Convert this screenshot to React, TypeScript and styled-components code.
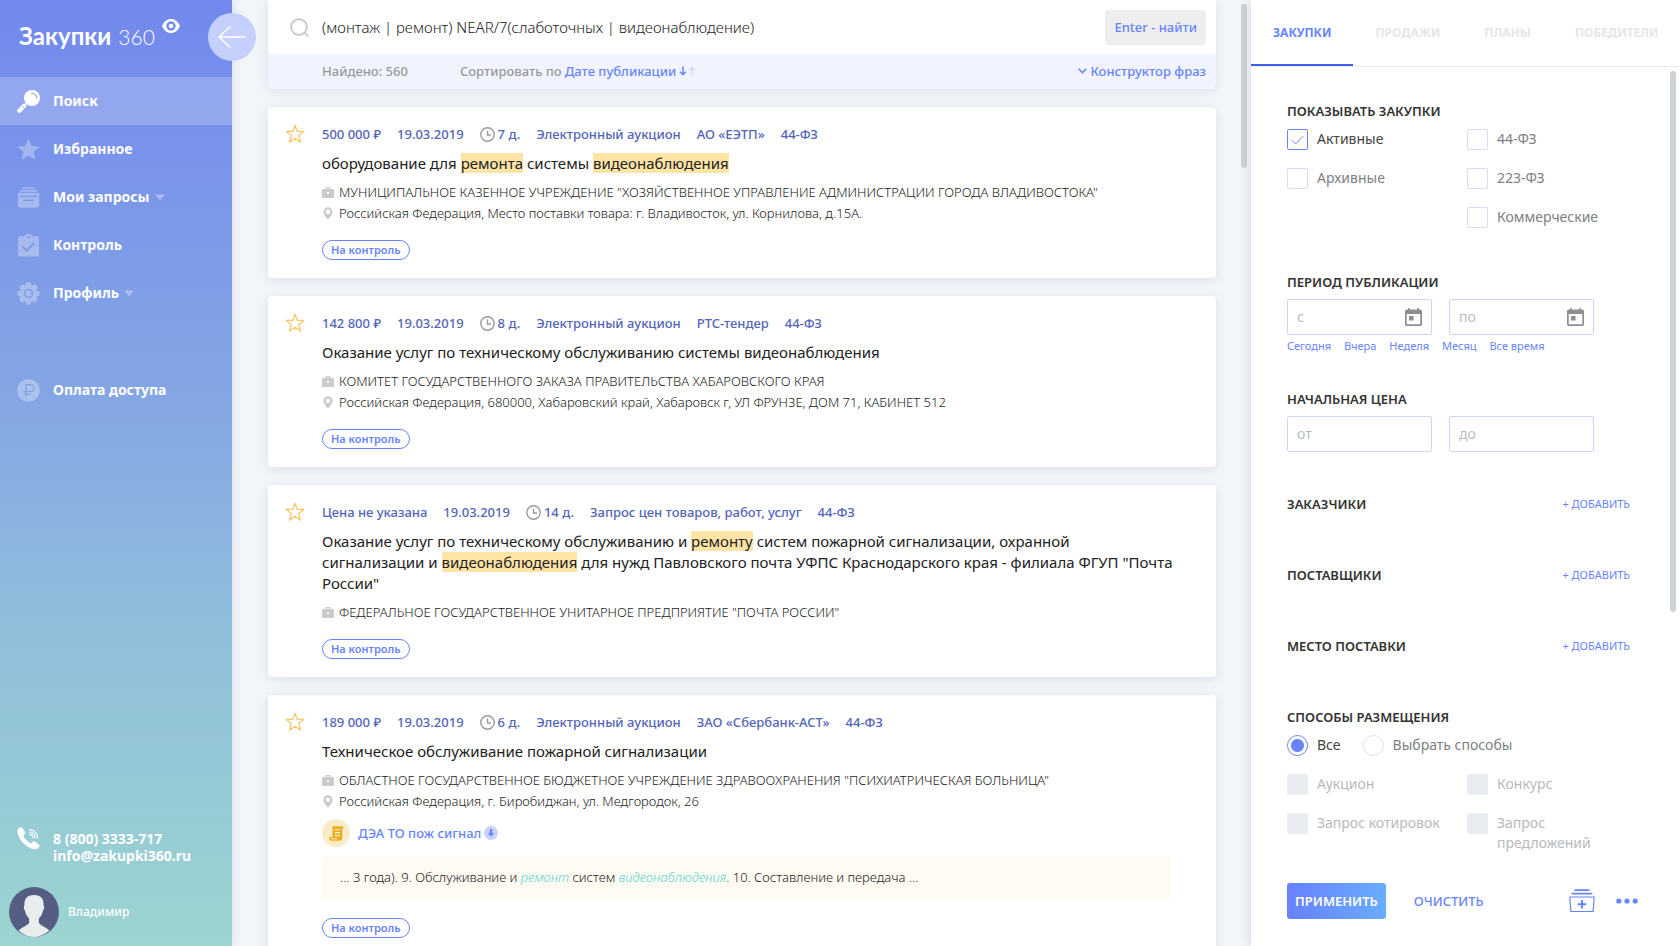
import React, { useState } from "react";
import styled, { createGlobalStyle, css } from "styled-components";

const GlobalStyle = createGlobalStyle`
  *, *::before, *::after { box-sizing: border-box; }
  body {
    margin: 0;
    font-family: "Noto Sans", "Open Sans", sans-serif;
    font-size: 14px;
    line-height: 20px;
    color: #333;
    background: #f3f6f9;
  }
  button, input { font: inherit; color: inherit; }
  button { border: 0; padding: 0; background: none; cursor: pointer; }
  a { color: inherit; text-decoration: none; }
  h2, h3, p, ul { margin: 0; padding: 0; }
  ul { list-style: none; }
  svg { display: block; flex: none; }
`;

const blue = "#6884fb";

/* ---------- Page shell ---------- */

const Page = styled.div`
  display: flex;
  height: 100vh;
  overflow: hidden;
`;

const Sidebar = styled.aside`
  position: relative;
  z-index: 2;
  flex: none;
  display: flex;
  flex-direction: column;
  width: 232px;
  color: #fff;
  background: linear-gradient(180deg, #7288ee 0%, #84a6e4 42%, #8fbedb 66%, #9cd4d0 100%);
  box-shadow: 2px 0 10px rgba(90, 100, 150, 0.14);
`;

const Main = styled.main`
  flex: 1;
  display: flex;
  min-width: 0;
`;

const Feed = styled.div`
  flex: 1;
  display: flex;
  flex-direction: column;
  gap: 18px;
  min-width: 0;
  padding: 0 25px 18px 36px;
  overflow-y: auto;
  scrollbar-width: none;
`;

const ScrollTrack = styled.div`
  flex: none;
  width: 10px;
  padding-top: 4px;
`;

const ScrollThumb = styled.div<{ $size: string }>`
  width: 6px;
  height: ${(p) => p.$size};
  border-radius: 3px;
  background: #cfd2d5;
`;

/* ---------- Sidebar ---------- */

const Logo = styled.a`
  display: flex;
  align-items: baseline;
  gap: 7px;
  height: 77px;
  padding: 21px 0 0 19px;
  font-family: Lato, sans-serif;
  font-size: 24px;
  line-height: 30px;
  font-weight: 700;
`;

const LogoNumber = styled.span`
  font-size: 21px;
  font-weight: 300;
`;

const LogoEye = styled.svg`
  align-self: flex-start;
  margin-top: -2px;
`;

const Collapse = styled.button`
  position: absolute;
  top: 13px;
  right: -24px;
  display: grid;
  place-items: center;
  width: 48px;
  height: 48px;
  border-radius: 50%;
  background: #c6d0fc;
`;

const NavLink = styled.a<{ $active?: boolean; $apart?: boolean }>`
  display: flex;
  align-items: center;
  height: 48px;
  margin-top: ${(p) => (p.$apart ? 49 : 0)}px;
  padding-left: 17px;
  font-weight: 700;
  background: ${(p) => (p.$active ? "rgba(255, 255, 255, 0.21)" : "none")};
  & > svg:first-child {
    margin-right: 13px;
    opacity: ${(p) => (p.$active ? 1 : 0.32)};
  }
`;

const Caret = styled.svg`
  margin-left: 5px;
  opacity: 0.35;
`;

const Contacts = styled.address`
  display: flex;
  gap: 13px;
  margin-top: auto;
  padding-left: 17px;
  font-style: normal;
  font-weight: 700;
  line-height: 17px;
`;

const ContactLines = styled.div`
  display: flex;
  flex-direction: column;
  padding-top: 3px;
`;

const UserLink = styled.a`
  display: flex;
  align-items: center;
  gap: 9px;
  padding: 23px 9px 9px;
  font-size: 12px;
  font-weight: 500;
`;

/* ---------- Search ---------- */

const surface = css`
  flex: none;
  background: #fff;
  box-shadow: 0 2px 12px rgba(95, 105, 160, 0.17);
`;

const SearchCard = styled.section`
  ${surface}
  border-radius: 0 0 6px 6px;
`;

const SearchForm = styled.form`
  display: flex;
  align-items: center;
  height: 54px;
  padding: 0 10px 0 22px;
`;

const QueryInput = styled.input`
  flex: 1;
  min-width: 0;
  padding: 0;
  margin-left: 13px;
  border: 0;
  outline: 0;
  font-size: 15px;
  font-weight: 300;
  color: #222;
  background: none;
`;

const FindButton = styled.button`
  height: 35px;
  padding: 0 9px;
  border-radius: 3px;
  font-size: 13px;
  font-weight: 500;
  color: ${blue};
  background: #eee;
`;

const SearchBar = styled.div`
  display: flex;
  align-items: center;
  height: 35px;
  padding: 0 10px 2px 54px;
  border-radius: 0 0 6px 6px;
  font-size: 13px;
  font-weight: 500;
  color: #999;
  background: #f1f4ff;
`;

const SortGroup = styled.div`
  display: flex;
  align-items: center;
  gap: 3px;
  margin-left: 52px;
`;

const LinkButton = styled.button`
  display: flex;
  align-items: center;
  gap: 3px;
  font-weight: 500;
  color: ${blue};
`;

const PhraseButton = styled(LinkButton)`
  margin-left: auto;
`;

/* ---------- Tender cards ---------- */

const Card = styled.article`
  ${surface}
  display: flex;
  align-items: flex-start;
  padding: 17px 42px 18px 17px;
  border-radius: 4px;
`;

const StarButton = styled.button`
  flex: none;
  width: 37px;
`;

const CardBody = styled.div`
  flex: 1;
  min-width: 0;
`;

const Meta = styled.ul`
  display: flex;
  gap: 16px;
  font-size: 13px;
  font-weight: 500;
  color: #5365b8;
`;

const MetaItem = styled.li`
  display: flex;
  align-items: center;
  gap: 3px;
`;

const Title = styled.h2`
  margin: 9px 0 8px;
  font-size: 15px;
  line-height: 21px;
  font-weight: 450;
  color: #222;
`;

const Mark = styled.mark`
  color: inherit;
  background: #ffe4a6;
`;

const Info = styled.p`
  display: flex;
  align-items: center;
  font-size: 13px;
  line-height: 21px;
  font-weight: 300;
  color: #222;
`;

const InfoIcon = styled.span`
  flex: none;
  display: flex;
  justify-content: center;
  width: 12px;
  margin-right: 5px;
`;

const DocRow = styled.div`
  display: flex;
  align-items: center;
  gap: 8px;
  height: 28px;
  margin: 7px 0 9px;
  font-size: 13px;
`;

const DocBadge = styled.span`
  display: grid;
  place-items: center;
  width: 28px;
  height: 28px;
  border-radius: 50%;
  background: #fbecc8;
`;

const Snippet = styled.p`
  margin: 0 3px 19px 0;
  padding: 11px 18px;
  border-radius: 3px;
  font-size: 13px;
  line-height: 21px;
  font-weight: 300;
  color: #222;
  background: #fffaf2;
`;

const Found = styled.em`
  color: #55d6d2;
`;

const ControlButton = styled.button`
  display: block;
  height: 20px;
  margin-top: 16px;
  padding: 0 8px;
  border: 1px solid ${blue};
  border-radius: 10px;
  font-size: 11px;
  line-height: 18px;
  font-weight: 600;
  color: ${blue};
`;

/* ---------- Filter panel ---------- */

const Filters = styled.aside`
  position: relative;
  flex: none;
  display: flex;
  flex-direction: column;
  width: 429px;
  background: #fff;
  box-shadow: -2px 0 12px rgba(95, 105, 160, 0.17);
`;

const Tabs = styled.div`
  flex: none;
  display: flex;
  height: 67px;
  border-bottom: 1px solid #ebebee;
`;

const Tab = styled.button<{ $active?: boolean }>`
  padding: 2px 22px 0;
  border-bottom: 2px solid ${(p) => (p.$active ? "#3f5ef0" : "transparent")};
  font-size: 12px;
  font-weight: 700;
  color: ${(p) => (p.$active ? blue : "#e6e6e8")};
`;

const FilterScroll = styled.div`
  flex: 1;
  display: flex;
  min-height: 0;
`;

const FilterBody = styled.form`
  flex: 1;
  min-width: 0;
  padding: 34px 40px 0 36px;
  overflow-y: auto;
  scrollbar-width: none;
`;

const Section = styled.section<{ $after: number }>`
  margin-bottom: ${(p) => p.$after}px;
`;

const SectionHead = styled.div`
  display: flex;
  justify-content: space-between;
  align-items: center;
`;

const SectionTitle = styled.h3`
  font-size: 13px;
  line-height: 20px;
  font-weight: 600;
  color: #333;
`;

const AddButton = styled.button`
  font-size: 11px;
  font-weight: 400;
  color: ${blue};
`;

const OptionGrid = styled.div<{ $top: number }>`
  display: grid;
  grid-template-columns: 180px 1fr;
  gap: 18px 0;
  align-items: start;
  margin-top: ${(p) => p.$top}px;
`;

const OptionColumn = styled.div`
  display: grid;
  gap: 18px;
`;

const OptionLabel = styled.label<{ $tone: string }>`
  display: flex;
  gap: 9px;
  min-height: 21px;
  color: ${(p) => p.$tone};
`;

const BoxWrap = styled.span`
  display: grid;
  place-items: center;
  flex: none;
  width: 21px;
  height: 21px;
  & > * { grid-area: 1 / 1; }
  & > svg { pointer-events: none; z-index: 1; }
`;

const Box = styled.input`
  appearance: none;
  width: 21px;
  height: 21px;
  margin: 0;
  border: 1px solid #d8dbfb;
  border-radius: 2px;
  background: #fff;
  &:checked { border-color: ${blue}; }
  &:disabled { border-color: #e9edf2; background: #e9edf2; }
`;

const RadioRow = styled.div`
  display: flex;
  gap: 22px;
  margin-top: 8px;
`;

const Radio = styled.input`
  appearance: none;
  flex: none;
  width: 21px;
  height: 21px;
  margin: 0;
  border: 1px solid #dcdffc;
  border-radius: 50%;
  &:checked {
    border-color: ${blue};
    background: radial-gradient(circle, ${blue} 6px, #fff 7px);
  }
`;

const FieldRow = styled.div`
  display: grid;
  grid-template-columns: 1fr 1fr;
  gap: 17px;
  max-width: 307px;
  margin-top: 7px;
`;

const Field = styled.label`
  display: flex;
  align-items: center;
  height: 36px;
  padding: 0 9px;
  border: 1px solid #cfd4fd;
  border-radius: 2px;
`;

const FieldInput = styled.input`
  flex: 1;
  width: 0;
  padding: 0;
  border: 0;
  outline: 0;
  background: none;
  &::placeholder { color: #b9bdc2; opacity: 1; }
`;

const QuickLinks = styled.div`
  display: flex;
  gap: 13px;
  margin-top: 4px;
`;

const QuickLink = styled.button`
  font-size: 11px;
  line-height: 14px;
  color: ${blue};
`;

const FilterFooter = styled.footer`
  flex: none;
  display: flex;
  align-items: center;
  height: 90px;
  padding: 0 42px 0 36px;
`;

const ApplyButton = styled.button`
  height: 36px;
  padding: 0 8px;
  border-radius: 3px;
  font-size: 13px;
  font-weight: 600;
  color: #fff;
  background: linear-gradient(90deg, #6880ff, #68adff);
`;

const ClearButton = styled.button`
  margin-left: 28px;
  font-size: 13px;
  font-weight: 500;
  color: ${blue};
`;

const FooterIcons = styled.div`
  display: flex;
  align-items: center;
  gap: 21px;
  margin-left: auto;
`;

/* ---------- Icons ---------- */

const SearchSolidIcon = () => (
  <svg width="23" height="23" viewBox="0 0 23 23" fill="none">
    <circle cx="15" cy="8" r="8" fill="#fff" />
    <path d="M14.5 3.2a5 5 0 0 1 5.2 5" stroke="#8fa3ea" strokeWidth="1.1" strokeLinecap="round" />
    <path d="M9.6 13.4 7.4 15.6" stroke="#fff" strokeWidth="2" />
    <path d="m7.2 15.8-4.9 4.9" stroke="#fff" strokeWidth="4.2" strokeLinecap="round" />
    <path d="m5 16 2.4 2.4" stroke="#8fa3ea" strokeWidth=".7" />
  </svg>
);

const StarSolidIcon = () => (
  <svg width="23" height="23" viewBox="0 0 23 23" fill="#fff">
    <path d="m11.5.8 3.200 7.100 7.800.9-5.800 5.200 1.600 7.700-6.800-3.900-6.800 3.900 1.600-7.700L.5 8.800l7.800-.9z" />
  </svg>
);

const TrayIcon = () => (
  <svg width="23" height="23" viewBox="0 0 23 23" fill="#fff">
    <rect x="4.500" y="1.500" width="14" height="1.500" rx=".7" />
    <rect x="2.500" y="4" width="18" height="1.700" rx=".8" />
    <path fillRule="evenodd" d="M.8 6.700h21.400v13.300a1.800 1.800 0 0 1-1.800 1.800H2.600A1.800 1.800 0 0 1 .8 20zM3 9.800v1.200h17V9.800zm3.500 3.900v1.200h10v-1.200z" />
  </svg>
);

const ClipboardIcon = () => (
  <svg width="23" height="23" viewBox="0 0 23 23" fill="#fff">
    <path fillRule="evenodd" d="M3.200 2.300h4.600a4 4 0 0 1 7.400 0h4.600A2.200 2.200 0 0 1 22 4.500v15.800a2.200 2.200 0 0 1-2.200 2.200H3.200A2.200 2.200 0 0 1 1 20.300V4.500a2.200 2.200 0 0 1 2.200-2.200zm8.300-.3a1.200 1.200 0 1 0 0 2.400 1.200 1.200 0 0 0 0-2.400zm-5.300 9.800L4.800 13.200l4.900 4.900 8.400-8.400-1.400-1.400-7 7z" />
  </svg>
);

const GearIcon = () => (
  <svg width="23" height="23" viewBox="0 0 23 23">
    <g fill="#fff">
      {[0, 45, 90, 135].map((a) => (
        <rect key={a} x="8.700" y=".3" width="5.600" height="22.400" rx="2" transform={`rotate(${a} 11.500 11.500)`} />
      ))}
      <circle cx="11.500" cy="11.500" r="8.800" />
    </g>
    <circle cx="11.500" cy="11.500" r="3.900" fill="none" stroke="#7d98e8" strokeWidth="1.500" />
  </svg>
);

const RubleIcon = () => (
  <svg width="23" height="23" viewBox="0 0 23 23">
    <circle cx="11.500" cy="11.500" r="11.200" fill="#fff" />
    <path d="M9 18V5.700h4.700a3.400 3.400 0 0 1 0 6.900H6.500M6.500 15.400h7" fill="none" stroke="#84a6e4" strokeWidth="1.400" />
  </svg>
);

const PhoneIcon = () => (
  <svg width="23" height="23" viewBox="0 0 23 23" fill="none">
    <path fill="#fff" d="M1.200 1.700C2.600.3 4.300-.2 5.200.9l3 4.200c.6 1-.1 1.900-1.400 3-.7.600-.5 1.200.2 2.200a22 22 0 0 0 5.600 5.500c1 .7 1.600.8 2.200.1 1.100-1.300 2-2 3-1.300l4.200 3c1.100.9.4 2.400-1 3.600-3 2.600-9.200.4-14-4.400S-1.300 4.600 1.200 1.700z" />
    <path d="M12.500 7.300a3.600 3.600 0 0 1 3.300 3.500M12.500 5a6 6 0 0 1 5.800 6M12.500 2.700a8.300 8.300 0 0 1 8.200 8.400" stroke="#fff" strokeWidth="1.200" strokeLinecap="round" />
  </svg>
);

const AvatarIcon = () => (
  <svg width="50" height="50" viewBox="0 0 50 50">
    <circle cx="25" cy="25" r="25" fill="#555e82" />
    <path fill="#e9edee" d="M25 8c7 0 10 4 9.600 10.500.9.500.8 3-.7 5.600-.6 3.300-2.200 5.900-4 7.400v4.200c1 2.700 6.500 3.800 10.500 7.800A25 25 0 0 1 25 50a25 25 0 0 1-15.500-6.500c4-4 9.600-5.100 10.600-7.800v-4.200c-1.800-1.500-3.400-4.100-4-7.400-1.500-2.600-1.600-5.100-.7-5.600C15 12 18 8 25 8z" />
  </svg>
);

const DownCaret = () => (
  <Caret width="10" height="7" viewBox="0 0 10 7" fill="#fff">
    <path d="M0 .5h10L5 6.500z" />
  </Caret>
);

const SearchIcon = () => (
  <svg width="19" height="19" viewBox="0 0 19 19" fill="none" stroke="#c6c6c8" strokeWidth="1.700" strokeLinecap="round">
    <circle cx="9" cy="9" r="7.900" />
    <path d="m15 15 2.800 2.800" />
  </svg>
);

const SortArrows = () => (
  <svg width="17" height="10" viewBox="0 0 17 10" fill="none" strokeWidth="1.500">
    <path d="M4 .5v8M1 5.700l3 3 3-3" stroke={blue} />
    <path d="M13 9.500v-8M10 4.300l3-3 3 3" stroke="#d3dafd" />
  </svg>
);

const ChevronIcon = () => (
  <svg width="9" height="6" viewBox="0 0 9 6" fill="none" stroke={blue} strokeWidth="1.500">
    <path d="m.7.800 3.800 3.800L8.300.8" />
  </svg>
);

const StarIcon = () => (
  <svg width="20" height="20" viewBox="0 0 20 20" fill="none" stroke="#fbc76b" strokeWidth="1.300" strokeLinejoin="round">
    <path d="m10 1.200 2.200 6.200h6.600l-5.200 4 1.900 6.700L10 14.200l-5.500 3.900 1.900-6.700-5.200-4h6.600z" />
  </svg>
);

const ClockIcon = () => (
  <svg width="15" height="15" viewBox="0 0 15 15" fill="none" stroke="#9a9a9e" strokeWidth="1.400">
    <circle cx="7.500" cy="7.500" r="6.700" />
    <path d="M7.500 3.500v4.500h3.500" />
  </svg>
);

const BriefcaseIcon = () => (
  <svg width="12" height="11" viewBox="0 0 12 11" fill="#cbcbcd">
    <path fillRule="evenodd" d="M3.500 2V1c0-.6.400-1 1-1h3c.6 0 1 .4 1 1v1H11c.6 0 1 .4 1 1v7c0 .6-.4 1-1 1H1c-.6 0-1-.4-1-1V3c0-.6.400-1 1-1zm1.200 0h2.600v-.8H4.700zM6 5.100a1.100 1.100 0 1 0 0 2.200 1.100 1.100 0 0 0 0-2.200z" />
  </svg>
);

const PinIcon = () => (
  <svg width="10" height="13" viewBox="0 0 10 13" fill="#cbcbcd">
    <path fillRule="evenodd" d="M5 .3a4.600 4.600 0 0 1 4.600 4.600C9.600 8 5 12.500 5 12.500S.4 8 .4 4.900A4.600 4.600 0 0 1 5 .3zm0 2.300a2.200 2.200 0 1 0 0 4.400 2.200 2.200 0 0 0 0-4.400z" />
  </svg>
);

const ScrollDocIcon = () => (
  <svg width="15" height="15" viewBox="0 0 15 15" fill="#e9ae22">
    <path fillRule="evenodd" d="M3.500.300h10.700v2.200h-1v9.200a3 3 0 0 1-3 3H2.300A2 2 0 0 1 .3 12.700V11h3.200zm2.300 2.900v1.300h5V3.200zm0 2.900v1.300h5V6.100zM5.800 9v1.300h5V9zm-4.100 3.300c0 .6.300 1 .8 1h5.700a2.500 2.500 0 0 1-.3-1z" />
  </svg>
);

const DownloadIcon = () => (
  <svg width="14" height="14" viewBox="0 0 14 14">
    <circle cx="7" cy="7" r="7" fill="#c9d3fc" />
    <path d="M5.900 3h2.200v4h2L7 10.700 3.900 7h2z" fill={blue} />
  </svg>
);

const CalendarIcon = () => (
  <svg width="17" height="18" viewBox="0 0 17 18" fill="#8f8f91">
    <path fillRule="evenodd" d="M3 0h1.700v1.500h7.600V0H14v1.500h1.200c1 0 1.800.8 1.800 1.800v12.900c0 1-.8 1.800-1.800 1.800H1.800C.8 18 0 17.200 0 16.200V3.300c0-1 .8-1.800 1.800-1.800H3zM1.700 6v10.300h13.600V6z" />
    <rect x="4" y="8" width="4.500" height="4.500" />
  </svg>
);

const CheckIcon = () => (
  <svg width="13" height="10" viewBox="0 0 13 10" fill="none" stroke={blue} strokeWidth="1">
    <path d="M1 5.300 4.600 8.900 12.200 1.200" />
  </svg>
);

const SaveTrayIcon = () => (
  <svg width="26" height="24" viewBox="0 0 26 24" fill="none" stroke={blue}>
    <path d="M6.200 1.200h13.600M3.300 4.600h19.400" strokeWidth="1.700" strokeLinecap="round" />
    <path d="M.8 8h24.400l-1.100 14.500H1.900z" strokeWidth="1.200" strokeLinejoin="round" />
    <path d="M13 11v8.400M8.800 15.200h8.400" strokeWidth="1.900" />
  </svg>
);

const DotsIcon = () => (
  <svg width="22" height="6" viewBox="0 0 22 6" fill={blue}>
    <circle cx="2.800" cy="3" r="2.600" />
    <circle cx="11" cy="3" r="2.600" />
    <circle cx="19.200" cy="3" r="2.600" />
  </svg>
);

/* ---------- Composed parts ---------- */

type Tender = {
  price: string;
  date: string;
  left: string;
  kind: string[];
  title: React.ReactNode;
  customer: string;
  address?: string;
  doc?: { name: string; text: React.ReactNode };
};

const tenders: Tender[] = [
  {
    price: "500 000 ₽",
    date: "19.03.2019",
    left: "7 д.",
    kind: ["Электронный аукцион", "АО «ЕЭТП»", "44-ФЗ"],
    title: (
      <>
        оборудование для <Mark>ремонта</Mark> системы <Mark>видеонаблюдения</Mark>
      </>
    ),
    customer: 'МУНИЦИПАЛЬНОЕ КАЗЕННОЕ УЧРЕЖДЕНИЕ "ХОЗЯЙСТВЕННОЕ УПРАВЛЕНИЕ АДМИНИСТРАЦИИ ГОРОДА ВЛАДИВОСТОКА"',
    address: "Российская Федерация, Место поставки товара: г. Владивосток, ул. Корнилова, д.15А.",
  },
  {
    price: "142 800 ₽",
    date: "19.03.2019",
    left: "8 д.",
    kind: ["Электронный аукцион", "РТС-тендер", "44-ФЗ"],
    title: "Оказание услуг по техническому обслуживанию системы видеонаблюдения",
    customer: "КОМИТЕТ ГОСУДАРСТВЕННОГО ЗАКАЗА ПРАВИТЕЛЬСТВА ХАБАРОВСКОГО КРАЯ",
    address: "Российская Федерация, 680000, Хабаровский край, Хабаровск г, УЛ ФРУНЗЕ, ДОМ 71, КАБИНЕТ 512",
  },
  {
    price: "Цена не указана",
    date: "19.03.2019",
    left: "14 д.",
    kind: ["Запрос цен товаров, работ, услуг", "44-ФЗ"],
    title: (
      <>
        Оказание услуг по техническому обслуживанию и <Mark>ремонту</Mark> систем пожарной сигнализации, охранной
        сигнализации и <Mark>видеонаблюдения</Mark> для нужд Павловского почта УФПС Краснодарского края - филиала ФГУП
        "Почта России"
      </>
    ),
    customer: 'ФЕДЕРАЛЬНОЕ ГОСУДАРСТВЕННОЕ УНИТАРНОЕ ПРЕДПРИЯТИЕ "ПОЧТА РОССИИ"',
  },
  {
    price: "189 000 ₽",
    date: "19.03.2019",
    left: "6 д.",
    kind: ["Электронный аукцион", "ЗАО «Сбербанк-АСТ»", "44-ФЗ"],
    title: "Техническое обслуживание пожарной сигнализации",
    customer: 'ОБЛАСТНОЕ ГОСУДАРСТВЕННОЕ БЮДЖЕТНОЕ УЧРЕЖДЕНИЕ ЗДРАВООХРАНЕНИЯ "ПСИХИАТРИЧЕСКАЯ БОЛЬНИЦА"',
    address: "Российская Федерация, г. Биробиджан, ул. Медгородок, 26",
    doc: {
      name: "ДЭА ТО пож сигнал",
      text: (
        <>
          ... 3 года). 9. Обслуживание и <Found>ремонт</Found> систем <Found>видеонаблюдения</Found>. 10. Составление и
          передача ...
        </>
      ),
    },
  },
];

const TenderCard = ({ tender }: { tender: Tender }) => (
  <Card>
    <StarButton type="button" aria-label="В избранное">
      <StarIcon />
    </StarButton>
    <CardBody>
      <Meta>
        <MetaItem>{tender.price}</MetaItem>
        <MetaItem>{tender.date}</MetaItem>
        <MetaItem>
          <ClockIcon />
          {tender.left}
        </MetaItem>
        {tender.kind.map((k) => (
          <MetaItem key={k}>{k}</MetaItem>
        ))}
      </Meta>
      <Title>{tender.title}</Title>
      <Info>
        <InfoIcon>
          <BriefcaseIcon />
        </InfoIcon>
        {tender.customer}
      </Info>
      {tender.address && (
        <Info>
          <InfoIcon>
            <PinIcon />
          </InfoIcon>
          {tender.address}
        </Info>
      )}
      {tender.doc && (
        <>
          <DocRow>
            <DocBadge>
              <ScrollDocIcon />
            </DocBadge>
            <LinkButton type="button">
              {tender.doc.name}
              <DownloadIcon />
            </LinkButton>
          </DocRow>
          <Snippet>{tender.doc.text}</Snippet>
        </>
      )}
      <ControlButton type="button">На контроль</ControlButton>
    </CardBody>
  </Card>
);

const Option = ({ text, checked, disabled }: { text: string; checked?: boolean; disabled?: boolean }) => {
  const [on, setOn] = useState(!!checked);
  return (
    <OptionLabel $tone={disabled ? "#b9b9bb" : on ? "#444" : "#808082"}>
      <BoxWrap>
        <Box type="checkbox" checked={on} disabled={disabled} onChange={(e) => setOn(e.target.checked)} />
        {on && <CheckIcon />}
      </BoxWrap>
      {text}
    </OptionLabel>
  );
};

const RadioOption = ({ text, on, onPick }: { text: string; on: boolean; onPick: () => void }) => (
  <OptionLabel $tone={on ? "#444" : "#808082"}>
    <Radio type="radio" name="method" checked={on} onChange={onPick} />
    {text}
  </OptionLabel>
);

const AddSection = ({ title }: { title: string }) => (
  <Section $after={51}>
    <SectionHead>
      <SectionTitle>{title}</SectionTitle>
      <AddButton type="button">+ ДОБАВИТЬ</AddButton>
    </SectionHead>
  </Section>
);

export default function App() {
  const [method, setMethod] = useState("all");
  const [query, setQuery] = useState("(монтаж | ремонт) NEAR/7(слаботочных | видеонаблюдение)");
  return (
    <>
      <GlobalStyle />
      <Page>
        <Sidebar>
          <Logo href="#">
            Закупки <LogoNumber>360</LogoNumber>
            <LogoEye width="18" height="14" viewBox="0 0 18 14">
              <path d="M0 7C2 2.500 5.200 0 9 0s7 2.500 9 7c-2 4.500-5.200 7-9 7S2 11.500 0 7z" fill="#fff" />
              <circle cx="9" cy="7" r="4.700" fill="#7289ee" />
              <circle cx="9" cy="7" r="2.300" fill="#fff" />
            </LogoEye>
          </Logo>
          <Collapse type="button" aria-label="Свернуть меню">
            <svg width="28" height="22" viewBox="0 0 28 22" fill="none" stroke="#fff" strokeWidth="1.400" strokeLinecap="round" strokeLinejoin="round">
              <path d="M27 11H1M12 .8 1 11l11 10.200" />
            </svg>
          </Collapse>
          <nav>
            <NavLink href="#" $active>
              <SearchSolidIcon />
              Поиск
            </NavLink>
            <NavLink href="#">
              <StarSolidIcon />
              Избранное
            </NavLink>
            <NavLink href="#">
              <TrayIcon />
              Мои запросы
              <DownCaret />
            </NavLink>
            <NavLink href="#">
              <ClipboardIcon />
              Контроль
            </NavLink>
            <NavLink href="#">
              <GearIcon />
              Профиль
              <DownCaret />
            </NavLink>
            <NavLink href="#" $apart>
              <RubleIcon />
              Оплата доступа
            </NavLink>
          </nav>
          <Contacts>
            <PhoneIcon />
            <ContactLines>
              <a href="tel:88003333717">8 (800) 3333-717</a>
              <a href="mailto:info@zakupki360.ru">info@zakupki360.ru</a>
            </ContactLines>
          </Contacts>
          <UserLink href="#">
            <AvatarIcon />
            Владимир
          </UserLink>
        </Sidebar>

        <Main>
          <Feed>
            <SearchCard>
              <SearchForm onSubmit={(e) => e.preventDefault()}>
                <SearchIcon />
                <QueryInput aria-label="Запрос" value={query} onChange={(e) => setQuery(e.target.value)} />
                <FindButton type="submit">Enter - найти</FindButton>
              </SearchForm>
              <SearchBar>
                <span>Найдено: 560</span>
                <SortGroup>
                  <span>Сортировать по</span>
                  <LinkButton type="button">
                    Дате публикации
                    <SortArrows />
                  </LinkButton>
                </SortGroup>
                <PhraseButton type="button">
                  <ChevronIcon />
                  Конструктор фраз
                </PhraseButton>
              </SearchBar>
            </SearchCard>
            {tenders.map((t) => (
              <TenderCard key={t.customer} tender={t} />
            ))}
          </Feed>
          <ScrollTrack>
            <ScrollThumb $size="164px" />
          </ScrollTrack>
        </Main>

        <Filters>
          <Tabs>
            <Tab type="button" $active>
              ЗАКУПКИ
            </Tab>
            <Tab type="button">ПРОДАЖИ</Tab>
            <Tab type="button">ПЛАНЫ</Tab>
            <Tab type="button">ПОБЕДИТЕЛИ</Tab>
          </Tabs>
          <FilterScroll>
            <FilterBody>
              <Section $after={44}>
                <SectionTitle>ПОКАЗЫВАТЬ ЗАКУПКИ</SectionTitle>
                <OptionGrid $top={8}>
                  <OptionColumn>
                    <Option text="Активные" checked />
                    <Option text="Архивные" />
                  </OptionColumn>
                  <OptionColumn>
                    <Option text="44-ФЗ" />
                    <Option text="223-ФЗ" />
                    <Option text="Коммерческие" />
                  </OptionColumn>
                </OptionGrid>
              </Section>
              <Section $after={36}>
                <SectionTitle>ПЕРИОД ПУБЛИКАЦИИ</SectionTitle>
                <FieldRow>
                  <Field>
                    <FieldInput placeholder="с" aria-label="Дата с" />
                    <CalendarIcon />
                  </Field>
                  <Field>
                    <FieldInput placeholder="по" aria-label="Дата по" />
                    <CalendarIcon />
                  </Field>
                </FieldRow>
                <QuickLinks>
                  {["Сегодня", "Вчера", "Неделя", "Месяц", "Все время"].map((q) => (
                    <QuickLink type="button" key={q}>
                      {q}
                    </QuickLink>
                  ))}
                </QuickLinks>
              </Section>
              <Section $after={42}>
                <SectionTitle>НАЧАЛЬНАЯ ЦЕНА</SectionTitle>
                <FieldRow>
                  <Field>
                    <FieldInput placeholder="от" aria-label="Цена от" />
                  </Field>
                  <Field>
                    <FieldInput placeholder="до" aria-label="Цена до" />
                  </Field>
                </FieldRow>
              </Section>
              <AddSection title="ЗАКАЗЧИКИ" />
              <AddSection title="ПОСТАВЩИКИ" />
              <AddSection title="МЕСТО ПОСТАВКИ" />
              <Section $after={0}>
                <SectionTitle>СПОСОБЫ РАЗМЕЩЕНИЯ</SectionTitle>
                <RadioRow>
                  <RadioOption text="Все" on={method === "all"} onPick={() => setMethod("all")} />
                  <RadioOption text="Выбрать способы" on={method === "some"} onPick={() => setMethod("some")} />
                </RadioRow>
                <OptionGrid $top={18}>
                  <Option text="Аукцион" disabled />
                  <Option text="Конкурс" disabled />
                  <Option text="Запрос котировок" disabled />
                  <Option text="Запрос предложений" disabled />
                </OptionGrid>
              </Section>
            </FilterBody>
            <ScrollTrack>
              <ScrollThumb $size="541px" />
            </ScrollTrack>
          </FilterScroll>
          <FilterFooter>
            <ApplyButton type="button">ПРИМЕНИТЬ</ApplyButton>
            <ClearButton type="button">ОЧИСТИТЬ</ClearButton>
            <FooterIcons>
              <button type="button" aria-label="Сохранить запрос">
                <SaveTrayIcon />
              </button>
              <button type="button" aria-label="Ещё">
                <DotsIcon />
              </button>
            </FooterIcons>
          </FilterFooter>
        </Filters>
      </Page>
    </>
  );
}
